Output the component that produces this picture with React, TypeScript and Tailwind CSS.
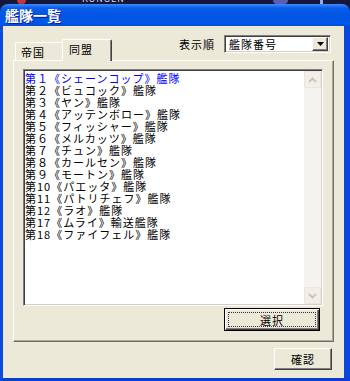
import React from 'react'

const fleets = [
  '第１《シェーンコップ》艦隊',
  '第２《ビュコック》艦隊',
  '第３《ヤン》艦隊',
  '第４《アッテンボロー》艦隊',
  '第５《フィッシャー》艦隊',
  '第６《メルカッツ》艦隊',
  '第７《チュン》艦隊',
  '第８《カールセン》艦隊',
  '第９《モートン》艦隊',
  '第10《パエッタ》艦隊',
  '第11《パトリチェフ》艦隊',
  '第12《ラオ》艦隊',
  '第17《ムライ》輸送艦隊',
  '第18《ファイフェル》艦隊',
]

const Chevron: React.FC<{ up?: boolean }> = ({ up }) => (
  <svg width="9" height="6" viewBox="0 0 9 6">
    <path
      d={up ? 'M1 5 L4.5 1.5 L8 5' : 'M1 1 L4.5 4.5 L8 1'}
      fill="none"
      stroke="#c9c6ba"
      strokeWidth="2"
    />
  </svg>
)

const App: React.FC = () => {
  return (
    <div className="w-[350px] h-[381px] overflow-hidden bg-[#15173a] flex flex-col font-['Noto_Sans_CJK_JP','Noto_Sans',sans-serif]">
      {/* desktop strip behind the window */}
      <div className="h-[4px] flex items-end overflow-hidden">
        <div className="ml-[17px] w-[9px] h-[4px] rounded-b-full bg-[#c8343a]" />
        <span className="ml-[56px] text-[9px] leading-[10px] text-[#d6daf0] tracking-[1px]">KONGEN</span>
        <div className="ml-[148px] w-[15px] h-[4px] rounded-b-full bg-[#5a5cb8]" />
        <div className="ml-[32px] w-[3px] h-[4px] bg-[#8ea8f0]" />
      </div>

      {/* window */}
      <div className="flex-1 flex flex-col rounded-t-[8px] overflow-hidden">
        {/* title bar */}
        <div className="h-[22px] shrink-0 flex items-center px-[5px] bg-[linear-gradient(180deg,#3d8ef8_0%,#0a5de8_18%,#0054e3_55%,#0058ea_85%,#0a4ed6_100%)]">
          <span className="text-white font-bold text-[14px] leading-[14px] [text-shadow:1px_1px_0_#0a1f8a]">
            艦隊一覧
          </span>
        </div>

        {/* body */}
        <div className="flex-1 flex flex-col bg-[#ece9d8] border-l-[3px] border-r-[6px] border-b-[3px] border-l-[#0b4be0] border-r-[#0a46d8] border-b-[#0a3fd0] pl-[10px] pr-[10px] text-[11px] leading-[12px] tracking-[1px] text-black">
          {/* tabs + sort order */}
          <div className="h-[34px] shrink-0 flex justify-between">
            <div className="flex items-end pl-[2px]">
              <div className="w-[47px] h-[18px] pl-[5px] pt-[3px] bg-[#ece9d8] border-t border-l border-white rounded-tl-[2px]">
                帝国
              </div>
              <div className="w-[50px] h-[22px] -mb-px pl-[6px] pt-[3px] bg-[#ece9d8] border-t border-l border-r border-t-white border-l-white border-r-[#404040] rounded-t-[2px] shadow-[inset_-1px_0_0_#808080] relative z-10">
                同盟
              </div>
            </div>
            <div className="flex items-center self-start mt-[9px] mr-[3px]">
              <span>表示順</span>
              <div className="ml-[9px] w-[107px] h-[18px] flex items-center bg-white border border-t-[#808080] border-l-[#808080] border-b-white border-r-white shadow-[inset_1px_1px_0_#404040,inset_-1px_-1px_0_#d4d0c8] p-[2px]">
                <span className="flex-1 pl-[2px]">艦隊番号</span>
                <div className="w-[16px] h-[14px] flex items-center justify-center bg-[#ece9d8] border border-t-white border-l-white border-b-[#404040] border-r-[#404040] shadow-[inset_-1px_-1px_0_#808080]">
                  <svg width="7" height="4" viewBox="0 0 7 4">
                    <path d="M0 0 H7 L3.5 4 Z" fill="#000" />
                  </svg>
                </div>
              </div>
            </div>
          </div>

          {/* tab panel */}
          <div className="h-[282px] shrink-0 flex flex-col items-start pl-[9px] pt-[8px] border border-t-white border-l-white border-r-[#716f64] border-b-[#716f64] shadow-[inset_-1px_-1px_0_#aca899]">
            <div className="w-[300px] h-[237px] flex bg-white border border-t-[#808080] border-l-[#808080] border-b-white border-r-white shadow-[inset_1px_1px_0_#404040,inset_-1px_-1px_0_#d4d0c8] p-px">
              <div className="flex-1 pt-px whitespace-nowrap">
                {fleets.map((name, i) => (
                  <div key={name} className={i === 0 ? 'h-[12px] text-[#0000ff]' : 'h-[12px]'}>
                    {name}
                  </div>
                ))}
              </div>
              <div className="w-[17px] flex flex-col bg-[#f4f3ee]">
                <div className="h-[17px] flex items-center justify-center border border-[#e8e6dd] rounded-[2px] bg-[#f1efe7]">
                  <Chevron up />
                </div>
                <div className="flex-1" />
                <div className="h-[17px] flex items-center justify-center border border-[#e8e6dd] rounded-[2px] bg-[#f1efe7]">
                  <Chevron />
                </div>
              </div>
            </div>
            <div className="w-[300px] mt-[2px] flex justify-end">
              <button className="mr-[3px] w-[96px] h-[23px] p-[3px] bg-[#ece9d8] border border-black shadow-[inset_1px_1px_0_#fff,inset_-1px_-1px_0_#404040,inset_-2px_-2px_0_#808080]">
                <div className="h-full flex items-center justify-center border border-dotted border-[#333]">選択</div>
              </button>
            </div>
          </div>

          {/* bottom button */}
          <div className="mt-[6px] flex justify-end">
            <button className="mr-[2px] w-[58px] h-[22px] flex items-center justify-center bg-[#ece9d8] border border-t-white border-l-white border-b-[#404040] border-r-[#404040] shadow-[inset_-1px_-1px_0_#808080]">
              確認
            </button>
          </div>
        </div>
      </div>
    </div>
  )
}

export default App
